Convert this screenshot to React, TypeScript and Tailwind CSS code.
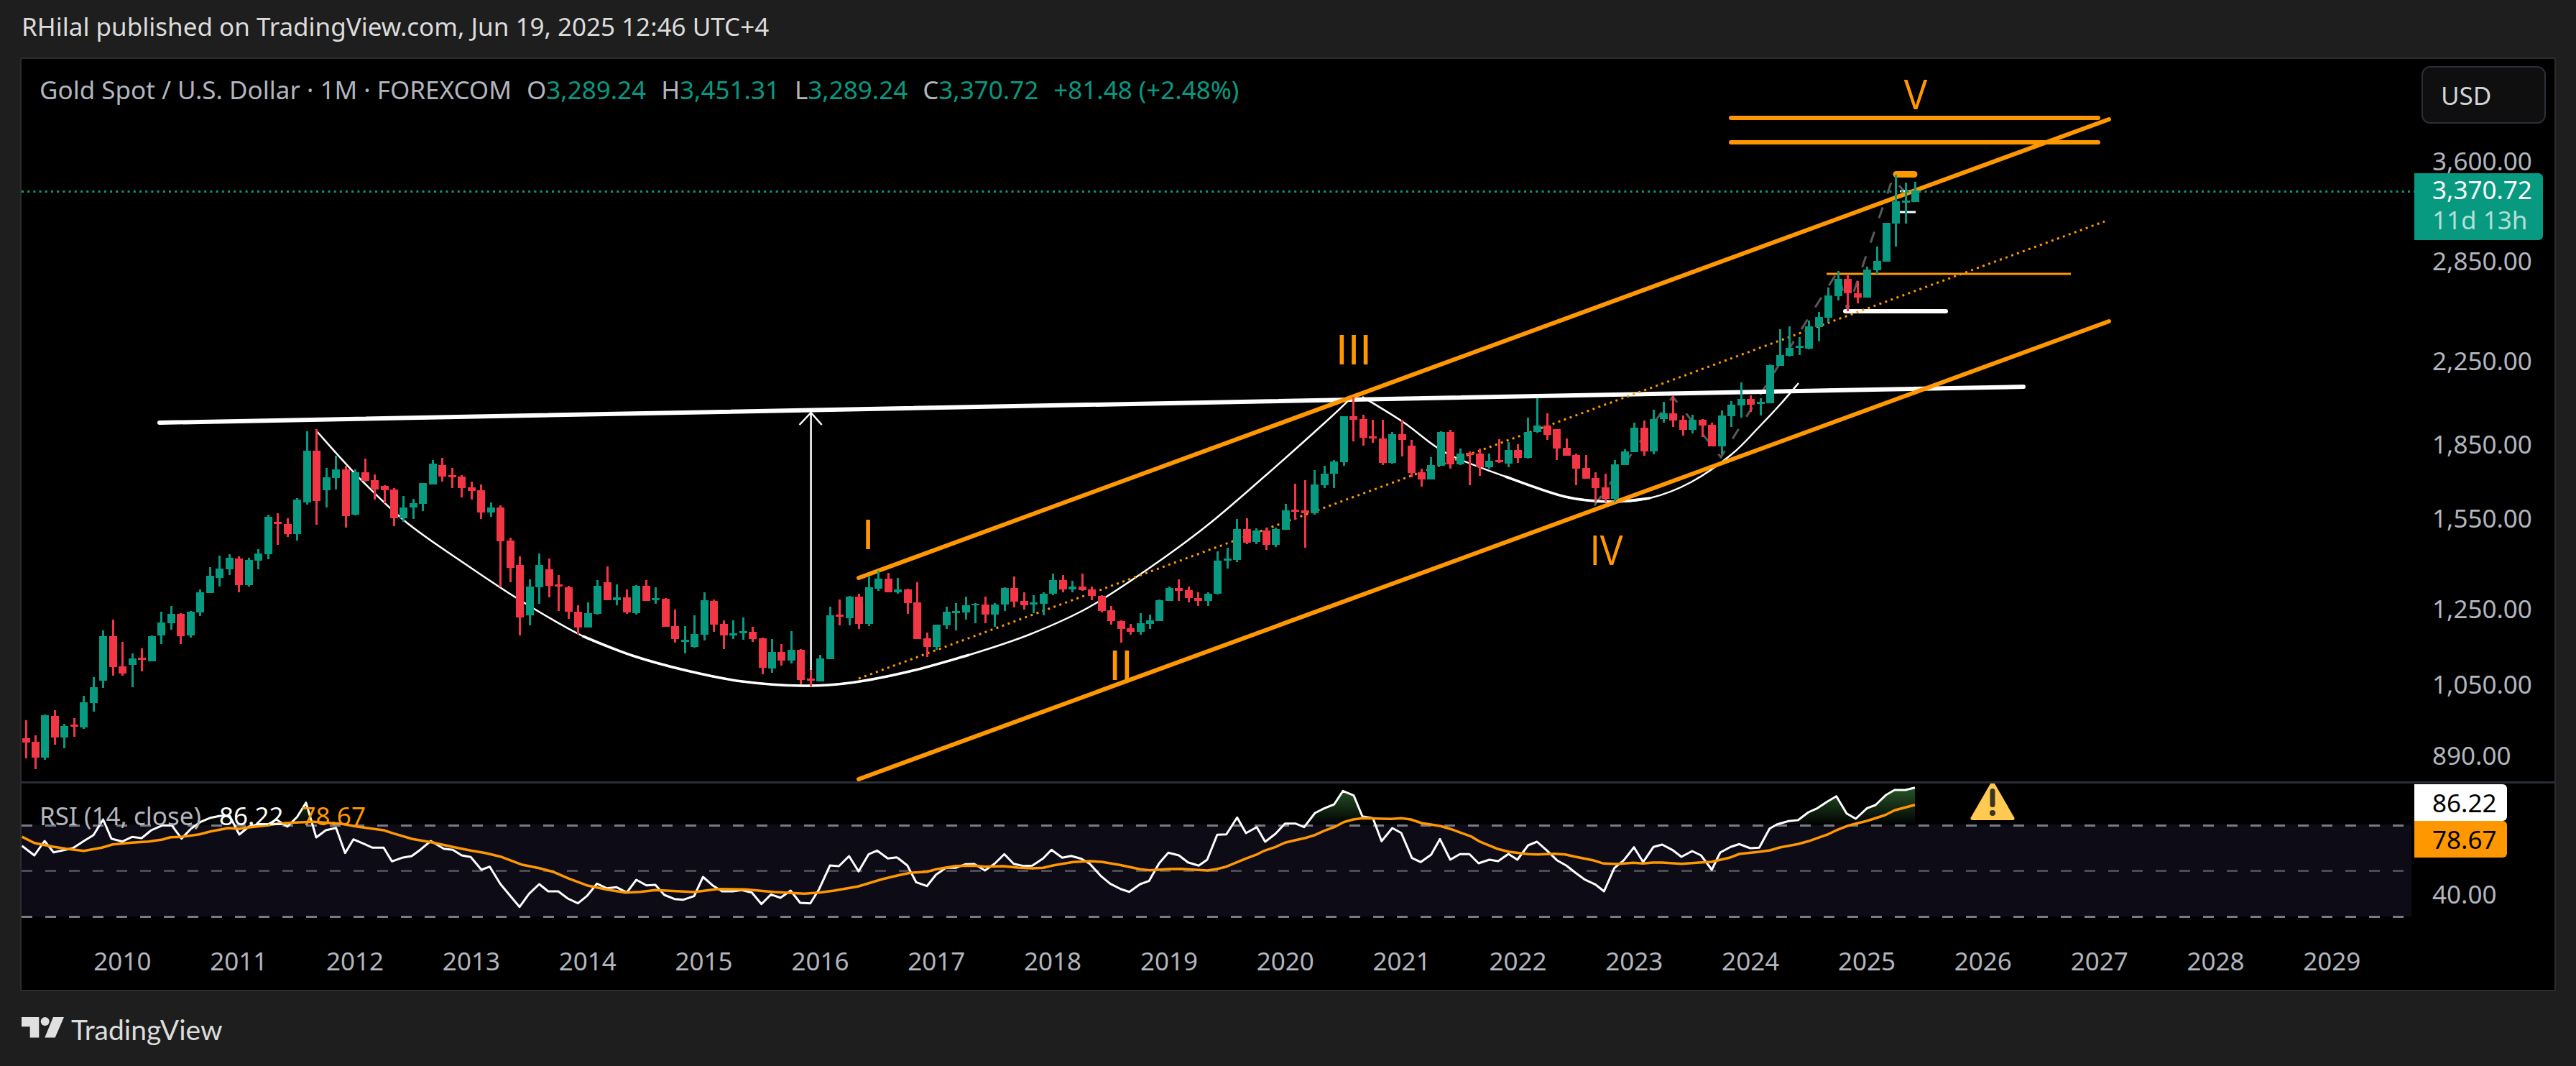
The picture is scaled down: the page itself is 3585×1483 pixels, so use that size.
import React from "react";

type C = [number, number, number, number, number, number];
// [x, up(1)/down(0), wickTop, bodyTop, bodyBottom, wickBottom], in reading coordinates
const A: C[] = [
[46,0,1357,1431,1449,1515],[63,0,1420,1446,1512,1560],[81,1,1333,1335,1511,1520],[99,0,1315,1339,1428,1458],[116,1,1372,1380,1428,1473],[134,0,1347,1374,1383,1425],[152,1,1255,1282,1386,1392],[169,1,1177,1218,1284,1320],[187,1,982,1005,1191,1221],[204,0,937,1005,1134,1170],[222,0,1029,1131,1161,1170],[240,1,1078,1098,1125,1218],[257,0,1057,1095,1104,1152],[275,1,1002,1005,1110,1110],[293,1,904,948,1002,1038],[310,1,880,912,951,978],[328,0,910,912,1005,1038],[345,1,900,903,1002,1011],[363,1,811,822,906,921],[381,1,718,753,825,825],[398,1,670,723,762,798],[416,1,664,679,726,750],[434,0,673,681,792,822],[451,1,679,687,792,798],[469,1,643,660,690,726],[487,1,499,507,663,684],[504,0,492,528,537,624],[522,0,514,537,579,591],[540,1,430,435,579,606],[557,1,150,231,447,456],[575,0,142,231,441,540],[593,1,304,342,396,468],[610,1,252,309,345,393],[628,0,294,309,504,552],[645,1,309,321,498,501],[663,0,265,321,357,360],[680,0,331,354,393,435],[698,0,375,378,396,450],[715,0,388,393,513,546],[733,1,420,468,513,528],[751,1,432,450,468,516],[769,1,366,366,453,483],[786,1,270,285,372,372],[803,0,262,291,339,360],[821,0,304,333,342,387],[839,0,334,339,387,426],[856,0,360,384,399,435],[874,0,373,396,489,516],[892,1,448,468,489,507],[910,0,460,468,609,800],[927,0,595,606,720,780],[945,0,672,708,927,1002],[962,1,768,798,918,960],[980,1,660,708,801,870],[997,0,682,726,795,843],[1015,0,751,789,798,900],[1032,0,795,801,903,933],[1050,0,876,903,969,1000],[1068,1,864,909,969,969],[1086,1,771,795,912,915],[1103,0,714,780,855,855],[1121,1,789,843,855,876],[1139,0,810,843,906,912],[1157,1,792,795,909,915],[1174,0,771,795,858,858],[1192,1,801,846,855,870],[1210,0,846,849,966,966],[1227,0,894,963,1017,1032],[1245,1,963,1020,1029,1077],[1262,1,918,996,1050,1053],[1280,1,822,855,999,1023],[1298,0,852,858,957,987],[1315,0,939,954,1002,1059],[1333,1,939,993,1002,1017],[1350,1,927,984,993,1020],[1368,0,966,987,1017,1029],[1385,0,1012,1014,1137,1164],[1403,1,1018,1071,1140,1158],[1420,0,1038,1071,1107,1128],[1438,1,984,1062,1107,1119],[1456,0,1059,1062,1188,1206],[1473,0,1146,1182,1191,1215],[1491,1,1083,1098,1194,1194],[1508,1,882,918,1101,1101],[1526,0,852,915,924,960],[1544,1,837,840,930,960],[1561,0,828,840,954,975],
];
const B: C[] = [
[131,1,888,928,1057,1065],[147,1,870,898,932,942],[163,0,878,898,946,946],[180,1,895,936,946,950],[196,0,932,936,984,1022],[213,0,910,981,1110,1110],[229,0,1088,1108,1138,1173],[245,1,1060,1060,1138,1148],[261,1,996,1014,1062,1075],[278,1,985,1012,1018,1080],[294,1,960,991,1017,1042],[310,1,985,986,992,1055],[326,0,960,990,1024,1055],[343,1,985,988,1024,1068],[359,1,928,931,990,1012],[375,0,890,931,979,1000],[391,0,946,977,991,1006],[408,1,955,981,988,1018],[424,1,945,951,986,1028],[440,1,880,904,952,955],[456,0,885,904,936,945],[472,1,905,926,935,945],[488,0,880,926,938,942],[505,0,925,936,958,973],[521,0,955,958,1012,1016],[538,0,994,1009,1046,1060],[554,0,1044,1046,1075,1122],[570,0,1058,1072,1085,1095],[586,1,1020,1055,1085,1095],[602,1,1025,1045,1056,1075],[618,1,972,974,1047,1047],[634,1,925,931,975,975],[651,0,900,931,940,975],[667,0,925,938,965,980],[683,0,945,965,975,993],[700,1,945,951,975,993],[716,1,802,835,952,953],[732,1,790,827,835,862],[749,1,687,723,832,840],[765,0,685,723,772,776],[781,1,722,728,770,776],[797,0,722,728,778,796],[814,1,718,723,780,786],[830,1,635,658,725,725],[847,0,565,656,662,690],[863,0,552,658,667,788],[879,1,515,567,668,672],[895,1,500,529,568,578],[912,1,480,486,529,578],[928,1,325,325,487,502],[945,0,258,325,339,416],[961,0,320,336,402,430],[977,0,340,397,405,420],[993,0,340,405,490,497],[1010,1,382,389,490,492],[1026,0,340,389,410,468],[1042,0,410,430,526,540],[1059,0,510,524,548,573],[1075,1,470,498,548,550],[1091,1,380,382,501,501],[1107,0,375,382,496,510],[1123,1,440,459,496,497],[1140,0,450,455,463,570],[1156,0,440,459,507,535],[1172,1,458,484,507,510],[1188,0,407,481,487,490],[1205,1,418,445,492,507],[1221,0,425,445,473,490],[1238,1,332,382,473,475],[1254,1,262,359,382,385],[1270,0,315,359,391,410],[1286,0,372,372,440,480],[1302,0,405,438,465,465],[1318,0,458,463,511,570],
];
const D: C[] = [
[17,0,1212,1263,1305,1305],[53,0,1280,1302,1340,1395],[88,0,1285,1339,1383,1395],[124,1,1232,1249,1383,1395],[158,1,1190,1198,1252,1252],[195,1,1087,1106,1200,1200],[229,0,1078,1106,1197,1215],[265,1,1036,1071,1197,1210],[299,1,1005,1050,1072,1085],[335,0,980,1050,1077,1103],[370,0,1058,1076,1113,1137],[406,1,1056,1076,1113,1128],[441,0,1073,1076,1097,1142],[477,0,1085,1095,1179,1179],[511,1,1040,1058,1178,1210],[547,1,1003,1017,1060,1102],[581,1,930,994,1018,1066],[617,0,980,995,1016,1044],[652,1,992,1006,1014,1058],[688,1,860,862,1010,1012],[723,1,722,824,865,865],[759,1,712,796,826,830],[793,1,754,788,796,822],[829,1,690,712,798,800],[864,1,656,675,714,770],[900,1,560,592,678,694],[935,1,495,525,594,609],[970,0,513,525,581,652],[1005,0,536,581,598,622],[1041,1,480,490,598,600],[1075,1,400,457,493,506],[1112,1,308,308,458,458],[1146,1,120,224,310,400],[1182,1,152,222,230,310],[1217,1,147,183,226,226],
];

const mapCandles = (a: C[], fx: (x: number) => number, fy: (y: number) => number) =>
  a.map(([x, up, wt, bt, bb, wb]) => ({
    cx: Math.round(35.5 + 13.487 * Math.round((fx(x) - 35.5) / 13.487)),
    up,
    wt: Math.round(fy(wt)),
    bt: Math.round(fy(bt)),
    bb: Math.round(fy(bb)),
    wb: Math.round(fy(wb)),
  }));

const candles = [
  ...mapCandles(A, (x) => x / 1.3067, (y) => 550 + y / 3),
  ...mapCandles(B, (x) => 1100 + x / 1.206, (y) => 450 + y / 2.529),
  ...mapCandles(D, (x) => 2200 + x / 2.613, (y) => 200 + y / 2.8),
];

type P = [number, number];
const smooth = (p: P[]) => {
  let d = `M${p[0][0]} ${p[0][1]}`;
  for (let i = 0; i < p.length - 1; i++) {
    const a = p[Math.max(i - 1, 0)], b = p[i], c = p[i + 1], e = p[Math.min(i + 2, p.length - 1)];
    d += ` C${(b[0] + (c[0] - a[0]) / 6).toFixed(1)} ${(b[1] + (c[1] - a[1]) / 6).toFixed(1)} ${(c[0] - (e[0] - b[0]) / 6).toFixed(1)} ${(c[1] - (e[1] - b[1]) / 6).toFixed(1)} ${c[0]} ${c[1]}`;
  }
  return d;
};

const cup1: P[] = [[440,599],[500,665],[566,727],[648,785],[727,837],[811,885],[880,912],[956,933],[1033,948],[1117,954],[1183,950],[1266,934],[1349,911],[1432,883],[1515,845],[1597,792],[1680,731],[1763,660],[1846,586],[1879,555]];
const cup2: P[] = [[1896,552],[1954,588],[2012,630],[2095,663],[2178,691],[2244,698],[2296,693],[2353,671],[2410,632],[2449,593],[2479,561],[2503,533]];
const zig: P[] = [[2219,703],[2328,552],[2395,636],[2558,377],[2571,432],[2634,248],[2652,268]];

const z8 = (x: number, y: number): P => [x / 2.613, 1080 + y / 3];
const z3 = (x: number, y: number): P => [x / 1.206, 1060 + y / 3];
const z9 = (x: number, y: number): P => [1250 + x / 3, 1090 + y / 3];
const z10 = (x: number, y: number): P => [1750 + x / 3, 1090 + y / 3];
const z11 = (x: number, y: number): P => [2250 + x / 3, 1080 + y / 3];
const conv = (f: (x: number, y: number) => P, a: number[]) => {
  const o: P[] = [];
  for (let i = 0; i < a.length; i += 2) o.push(f(a[i], a[i + 1]));
  return o;
};

const rsi: P[] = [
  ...conv(z8, [80,290,125,330,162,270,195,317,265,300,305,270,340,245,375,180,405,260,445,272,480,253,515,258,550,225,590,205,625,205,660,260,695,218,730,190,765,173,800,165,835,165,870,243,905,210,940,200,975,200,1005,180,1045,210,1080,170,1113,110,1150,255,1185,225,1222,215,1255,320,1285,263,1320,280,1355,298,1395,298,1425,355,1462,340,1497,333,1530,305]),
  ...conv(z3, [723,330,745,362,760,367,775,390,790,397,808,450,822,437,840,510,872,605,888,550,905,510,920,540,937,540,953,570,970,590,985,560,1002,508,1018,527,1035,523,1052,545,1068,492,1085,515,1100,513,1115,555,1132,572,1147,575,1165,560,1180,480,1197,517,1212,540,1230,540,1245,535,1262,545,1278,593,1294,553,1310,567,1327,537,1343,588,1360,590,1375,530,1393,432,1408,435,1425,393,1441,457,1458,385,1472,370,1490,403,1505,398]),
  ...conv(z9, [0,312,38,342,75,412,120,428,158,380,200,352,240,352,280,337,318,336,362,363,402,335,443,295,482,335,522,344,560,343,605,313,640,277,685,310,722,302,765,314,800,335,845,385,885,418,930,441,965,452,1010,420,1047,407,1090,332,1128,289,1172,300,1210,329,1255,343,1290,318,1332,214,1370,212,1415,142,1452,207,1497,182]),
  ...conv(z10, [32,243,75,210,115,167,158,167,195,182,240,123,280,103,320,87,357,31,402,50,438,137,482,145,518,241,563,186,600,206,645,311,682,328,725,297,762,232,805,318,845,295,885,295,923,333,968,318,1005,324,1048,294,1085,318,1130,258,1167,243,1210,281,1250,320,1290,343,1328,373,1365,400,1410,421,1447,450,1490,353]),
  ...conv(z11, [30,350,72,296,110,358,153,295,190,285,232,307,270,336,315,312,352,330,397,390,432,318,475,295,512,283,557,300,595,298,638,218,670,200,718,187,757,183,800,150,838,133,880,105,917,83,960,155,998,177,1045,133,1080,120,1125,77,1160,57,1205,57,1245,47]),
];
const rsiMa: P[] = [
  ...conv(z8, [80,252,125,278,190,293,240,302,305,311,370,298,410,284,480,277,540,272,590,264,620,254,660,253,725,242,765,230,830,216,870,219,900,214,970,205,1010,197,1090,192,1140,190,1240,198,1300,210,1395,225,1430,238,1500,262]),
  ...conv(z3, [724,335,760,355,790,370,815,380,840,395,875,428,905,443,930,460,955,487,985,515,1020,533,1050,545,1075,542,1100,535,1165,543,1205,530,1250,532,1300,543,1350,550,1375,545,1400,537,1440,520,1480,490]),
  ...conv(z9, [0,383,50,373,120,368,160,358,240,344,320,343,360,347,440,345,500,351,560,354,605,352,650,341,730,328,800,324,850,327,925,340,1010,358,1050,362,1130,357,1180,356,1290,363,1330,357,1370,347,1450,314]),
  ...conv(z10, [0,295,30,280,75,265,115,247,160,236,200,227,240,215,280,197,325,180,360,161,400,150,440,145,520,147,560,148,600,145,640,150,685,165,765,178,810,191,850,206,890,220,925,241,1000,272,1050,285,1130,295,1170,296,1240,293,1285,296,1325,305,1400,320,1445,334]),
  ...conv(z11, [0,366,70,361,110,364,150,360,190,360,270,365,355,359,395,357,470,340,512,324,595,315,640,309,680,297,757,283,800,271,880,243,920,224,960,208,1000,197,1045,186,1120,162,1160,142,1245,119]),
];
const pts = (p: P[]) => p.map(([x, y]) => `${x.toFixed(1)},${y.toFixed(1)}`).join(" ");

const ORANGE = "#ff9800";
const prices: [string, number][] = [
  ["3,600.00", 223],
  ["2,850.00", 362],
  ["2,250.00", 501],
  ["1,850.00", 617],
  ["1,550.00", 720],
  ["1,250.00", 846],
  ["1,050.00", 951],
  ["890.00", 1050],
];
const years = Array.from({ length: 20 }, (_, i) => 2010 + i);

function Legend() {
  const Val = ({ l, v }: { l: string; v: string }) => (
    <span>
      {l}
      <span className="text-[#089981]">{v}</span>
    </span>
  );
  return (
    <div className="absolute left-[25px] top-[23px] flex gap-[21px] text-[35px] leading-[40px] text-[#b2b5be] whitespace-nowrap">
      <span>Gold Spot / U.S. Dollar · 1M · FOREXCOM</span>
      <Val l="O" v="3,289.24" />
      <Val l="H" v="3,451.31" />
      <Val l="L" v="3,289.24" />
      <Val l="C" v="3,370.72" />
      <span className="text-[#089981]">+81.48 (+2.48%)</span>
    </div>
  );
}

function MainChart() {
  return (
    <svg viewBox="30 82 3330 1005" className="block h-[1005px] w-[3330px]" fill="none">
      {/* gray zigzag */}
      <polyline points={pts(zig)} stroke="#5a5a5a" strokeWidth="3" strokeDasharray="16 20" />
      {/* cups */}
      <path d={smooth(cup1)} stroke="#fff" strokeWidth="2.5" />
      <path d={smooth(cup1.slice(5, 13))} stroke="#fff" strokeWidth="3.5" />
      <path d={smooth(cup2)} stroke="#fff" strokeWidth="2.5" />
      <path d={smooth(cup2.slice(3, 7))} stroke="#fff" strokeWidth="3.5" />
      {/* measure arrow */}
      <path d="M1128.6 955V574M1112.6 591L1128.6 574L1143.6 591" stroke="#fff" strokeWidth="2.5" />
      {/* resistance */}
      <line x1="222" y1="588" x2="2816" y2="538" stroke="#fff" strokeWidth="6" strokeLinecap="round" />
      <line x1="2568" y1="433" x2="2708" y2="433" stroke="#fff" strokeWidth="6" strokeLinecap="round" />
      <line x1="2644" y1="295" x2="2666" y2="295" stroke="#fff" strokeWidth="3" />
      <line x1="2644" y1="266" x2="2660" y2="266" stroke="#fff" strokeWidth="3" />
      {/* channel */}
      <line x1="1195" y1="804" x2="2935" y2="166" stroke={ORANGE} strokeWidth="6" strokeLinecap="round" />
      <line x1="1195" y1="1084" x2="2935" y2="447" stroke={ORANGE} strokeWidth="6" strokeLinecap="round" />
      <line x1="1195" y1="944" x2="2929" y2="308" stroke={ORANGE} strokeWidth="3" strokeDasharray="3 5.5" />
      {/* targets */}
      <line x1="2409" y1="164" x2="2920" y2="164" stroke={ORANGE} strokeWidth="6" strokeLinecap="round" />
      <line x1="2409" y1="198" x2="2920" y2="198" stroke={ORANGE} strokeWidth="6" strokeLinecap="round" />
      <line x1="2542" y1="381" x2="2882" y2="381" stroke={ORANGE} strokeWidth="3" />
      <line x1="2639" y1="242.5" x2="2664" y2="242.5" stroke={ORANGE} strokeWidth="9" strokeLinecap="round" />
      {/* price line */}
      <line x1="30" y1="266.5" x2="3360" y2="266.5" stroke="#089981" strokeWidth="3" strokeDasharray="3 5.2" />
      {/* candles */}
      <g shapeRendering="crispEdges">
        {candles.map((c, i) => (
          <g key={i} fill={c.up ? "#089981" : "#f23645"}>
            <rect x={c.cx - 1} y={c.wt} width="3" height={Math.max(c.wb - c.wt, 1)} />
            <rect x={c.cx - 5} y={c.bt} width="11" height={Math.max(c.bb - c.bt, 2)} />
          </g>
        ))}
      </g>
      {/* wave labels */}
      <g fill={ORANGE} fontFamily="'Liberation Sans', sans-serif" fontSize="60" textAnchor="middle">
        <text x="1208" y="764">I</text>
        <text x="1560" y="946">II</text>
        <text x="1884" y="507">III</text>
        <text x="2236" y="786" textLength="46" lengthAdjust="spacingAndGlyphs">IV</text>
        <text x="2666" y="152" textLength="33" lengthAdjust="spacingAndGlyphs">V</text>
      </g>
    </svg>
  );
}

function RsiChart() {
  const areaPts = `${rsi[0][0]},1148 ${pts(rsi)} ${rsi[rsi.length - 1][0]},1148`;
  return (
    <svg viewBox="30 1090 3330 210" className="block h-[210px] w-[3330px]" fill="none">
      <defs>
        <linearGradient id="ob" gradientUnits="userSpaceOnUse" x1="0" y1="1092" x2="0" y2="1148">
          <stop offset="0" stopColor="#2a5c2c" />
          <stop offset="1" stopColor="#000" />
        </linearGradient>
        <clipPath id="above">
          <rect x="30" y="1090" width="3330" height="58" />
        </clipPath>
      </defs>
      <rect x="30" y="1147" width="3326" height="128" fill="#0d0b16" />
      <polygon points={areaPts} fill="url(#ob)" clipPath="url(#above)" />
      <g strokeWidth="3" strokeDasharray="15 18">
        <line x1="30" y1="1148.5" x2="3356" y2="1148.5" stroke="#787b86" />
        <line x1="30" y1="1211.5" x2="3356" y2="1211.5" stroke="#4a4b55" />
        <line x1="30" y1="1275.5" x2="3356" y2="1275.5" stroke="#787b86" />
      </g>
      <polyline points={pts(rsi)} stroke="#fff" strokeWidth="3" strokeLinejoin="round" />
      <polyline points={pts(rsiMa)} stroke={ORANGE} strokeWidth="3.5" strokeLinejoin="round" />
      {/* warning marker */}
      <path d="M2773 1085L2803 1137Q2805 1141 2800 1141H2746Q2741 1141 2743 1137Z" fill="#ffca4f" />
      <rect x="2769.5" y="1097" width="7" height="26" rx="3.5" fill="#3a3426" />
      <circle cx="2773" cy="1131" r="4" fill="#3a3426" />
    </svg>
  );
}

export default function App() {
  return (
    <div className="flex h-screen w-full flex-col overflow-hidden bg-[#1e1e1e] font-['Noto_Sans',sans-serif]">
      <header className="flex h-[80px] items-center pl-[30px] pb-[6px] text-[35px] text-[#dcdcdc] whitespace-nowrap">
        RHilal published on TradingView.com, Jun 19, 2025 12:46 UTC+4
      </header>

      <section className="ml-[28px] flex h-[1299px] w-[3529px] flex-col border-2 border-[#2c2c2c] bg-black">
        {/* price pane */}
        <div className="flex h-[1005px]">
          <div className="relative w-[3330px] overflow-hidden">
            <MainChart />
            <Legend />
          </div>
          <div className="relative flex-1 text-[35px] leading-none text-[#b2b5be]">
            <div className="absolute left-[10px] top-[10px] flex h-[80px] w-[173px] items-center rounded-[12px] border-2 border-[#2a2e39] bg-[#0f0f0f] pl-[25px] text-[#d1d4dc]">
              USD
            </div>
            {prices.map(([t, y]) => (
              <span key={t} className="absolute left-[25px] -translate-y-1/2" style={{ top: y - 82 }}>
                {t}
              </span>
            ))}
            <div className="absolute left-0 top-[159px] flex h-[93px] w-[179px] flex-col justify-center rounded-r-[6px] bg-[#089981] pb-[5px] pl-[25px] leading-[42px] text-white">
              <span>3,370.72</span>
              <span className="text-white/70">11d 13h</span>
            </div>
          </div>
        </div>

        <div className="h-[3px] bg-[#2a2e39]" />

        {/* RSI pane */}
        <div className="flex h-[210px]">
          <div className="relative w-[3330px] overflow-hidden">
            <RsiChart />
            <div className="absolute left-[25px] top-[25px] flex gap-[25px] text-[35px] leading-[40px] whitespace-nowrap">
              <span className="text-[#b2b5be]">RSI (14, close)</span>
              <span className="text-white">86.22</span>
              <span className="text-[#ff9800]">78.67</span>
            </div>
          </div>
          <div className="relative flex-1 text-[35px] leading-none">
            <div className="absolute left-0 top-[1px] flex h-[51px] w-[129px] items-center rounded-r-[6px] bg-white pl-[25px] text-black">
              86.22
            </div>
            <div className="absolute left-0 top-[52px] flex h-[51px] w-[129px] items-center rounded-r-[6px] bg-[#ff9800] pl-[25px] text-black">
              78.67
            </div>
            <span className="absolute left-[25px] top-[153px] -translate-y-1/2 text-[#b2b5be]">40.00</span>
          </div>
        </div>

        {/* time axis */}
        <div className="relative flex-1 text-[35px] leading-none text-[#b2b5be]">
          {years.map((y, i) => (
            <span
              key={y}
              className="absolute top-[36px] -translate-x-1/2 -translate-y-1/2"
              style={{ left: 140.4 + 161.84 * i }}
            >
              {y}
            </span>
          ))}
        </div>
      </section>

      <footer className="flex flex-1 items-start gap-[10px] pl-[30px] pt-[36px]">
        <svg viewBox="0 0 59 29" className="h-[29px] w-[59px]" fill="#e0e0e0">
          <path d="M0 0H24.3V28.5H11.7V13.3H0Z" />
          <circle cx="32.7" cy="6" r="6" />
          <path d="M44 0H59L46.7 28.5H32.3Z" />
        </svg>
        <span className="font-['Lato',sans-serif] text-[39px] leading-[34px] text-[#dcdcdc]">TradingView</span>
      </footer>
    </div>
  );
}
